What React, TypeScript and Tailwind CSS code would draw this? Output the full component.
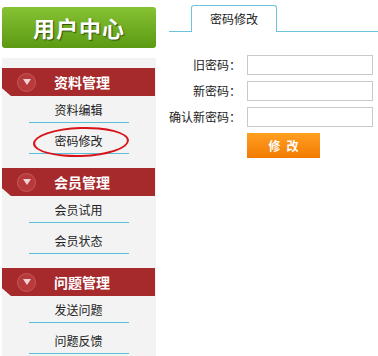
import React from 'react';

const font = { fontFamily: '"Noto Sans CJK SC", "Noto Sans", sans-serif' };

const Item = ({ text, first, circled }: { text: string; first?: boolean; circled?: boolean }) => (
  <div className={`relative flex flex-col items-center justify-end ${first ? 'h-[27px]' : 'h-[31px]'}`}>
    <span className="text-[12px] leading-[16px] mb-[4px] text-[#222]">{text}</span>
    <div className="w-[100px] h-px bg-[#5cbfd8]" />
    {circled && (
      <div className="absolute left-[31px] top-[4px] w-[96px] h-[30px] rounded-[50%] border-2 border-[#d8141a] -rotate-2" />
    )}
  </div>
);

const GroupHeader = ({ title }: { title: string }) => (
  <div className="h-[28px] bg-[#a6292b] flex items-center [clip-path:polygon(0_0,100%_0,100%_100%,9px_100%,0_72%)]">
    <div className="ml-[15px] w-[19px] h-[19px] rounded-full bg-[#b8393b] border border-[#c45a5b] flex items-center justify-center">
      <svg width="8" height="7" viewBox="0 0 8 7">
        <polygon points="0,0 8,0 4,6" fill="#f3d4d4" />
      </svg>
    </div>
    <span className="ml-[18px] text-[14px] font-bold text-white">{title}</span>
  </div>
);

const Field = ({ label }: { label: string }) => (
  <div className="flex items-center h-[20px]">
    <span className="w-[85px] text-right text-[12px] text-[#222] pr-[6px]">{label}</span>
    <input className="w-[126px] h-[20px] border border-[#c9c9c9] bg-white outline-none" />
  </div>
);

export default function App() {
  return (
    <div className="w-[378px] h-[356px] bg-white overflow-hidden flex" style={font}>
      <div className="ml-[2px] w-[154px] flex flex-col">
        <div className="mt-[7px] h-[41px] rounded-[3px] bg-gradient-to-b from-[#86c232] to-[#5b9a12] flex items-center justify-center">
          <span className="text-[22px] font-bold text-white tracking-[1px] [text-shadow:1px_1px_1px_#2f4f08]">用户中心</span>
        </div>
        <div className="mt-[10px] flex-1 bg-[#f3f3f3] pt-[10px] pr-[1px]">
          <GroupHeader title="资料管理" />
          <Item text="资料编辑" first />
          <Item text="密码修改" circled />
          <div className="h-[14px]" />
          <GroupHeader title="会员管理" />
          <Item text="会员试用" first />
          <Item text="会员状态" />
          <div className="h-[14px]" />
          <GroupHeader title="问题管理" />
          <Item text="发送问题" first />
          <Item text="问题反馈" />
        </div>
      </div>
      <div className="flex-1 flex flex-col">
        <div className="mt-[5px] ml-[13px] flex border-b border-[#6cc4da] h-[27px]">
          <div className="ml-[22px] w-[86px] h-[27px] -mb-px border border-b-0 border-[#6cc4da] rounded-t-[3px] bg-white flex items-center justify-center">
            <span className="text-[12px] text-[#222]">密码修改</span>
          </div>
        </div>
        <div className="mt-[23px] ml-[6px] flex flex-col gap-[6px]">
          <Field label="旧密码：" />
          <Field label="新密码：" />
          <Field label="确认新密码：" />
        </div>
        <div className="mt-[6px] ml-[91px] w-[73px] h-[25px] bg-gradient-to-b from-[#ffa020] to-[#f27a00] flex items-center justify-center">
          <span className="text-[12px] font-bold text-white tracking-[6px] pl-[6px]">修改</span>
        </div>
      </div>
    </div>
  );
}
